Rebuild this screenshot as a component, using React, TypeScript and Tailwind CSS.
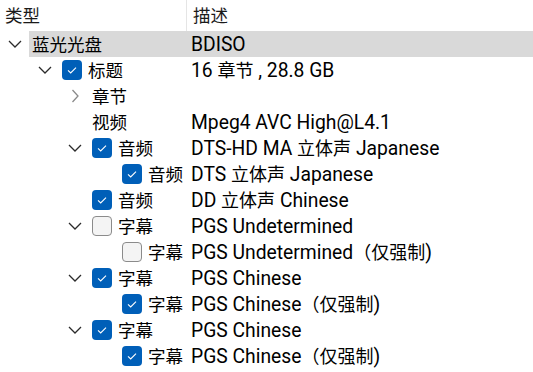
import React from 'react';

type Row = {
  level: number;
  chev?: 'down' | 'right';
  check?: boolean;
  label: string;
  desc: string;
  selected?: boolean;
};

const ROWS: Row[] = [
  { level: 0, chev: 'down', label: '蓝光光盘', desc: 'BDISO', selected: true },
  { level: 1, chev: 'down', check: true, label: '标题', desc: '16 章节 , 28.8 GB' },
  { level: 2, chev: 'right', label: '章节', desc: '' },
  { level: 2, label: '视频', desc: 'Mpeg4 AVC High@L4.1' },
  { level: 2, chev: 'down', check: true, label: '音频', desc: 'DTS-HD MA 立体声 Japanese' },
  { level: 3, check: true, label: '音频', desc: 'DTS 立体声 Japanese' },
  { level: 2, check: true, label: '音频', desc: 'DD 立体声 Chinese' },
  { level: 2, chev: 'down', check: false, label: '字幕', desc: 'PGS Undetermined' },
  { level: 3, check: false, label: '字幕', desc: 'PGS Undetermined（仅强制)' },
  { level: 2, chev: 'down', check: true, label: '字幕', desc: 'PGS Chinese' },
  { level: 3, check: true, label: '字幕', desc: 'PGS Chinese（仅强制)' },
  { level: 2, chev: 'down', check: true, label: '字幕', desc: 'PGS Chinese' },
  { level: 3, check: true, label: '字幕', desc: 'PGS Chinese（仅强制)' },
];

const INDENT = [0, 30, 60, 90];
const CJK = /[\u3000-\u9fff\uff00-\uffef]/;

// latin runs in Roboto a little larger than the CJK runs, like Segoe UI next to YaHei
function Desc({ text }: { text: string }) {
  const parts = text.split(/([\u3000-\u9fff\uff00-\uffef]+)/).filter(Boolean);
  return (
    <span>
      {parts.map((p, i) =>
        CJK.test(p) ? (
          <span key={i} className="text-[18px]" style={{ fontFamily: '"Noto Sans CJK SC", sans-serif' }}>{p}</span>
        ) : (
          <span key={i} className="text-[19.3px]" style={{ fontFamily: 'Roboto, sans-serif' }}>{p}</span>
        )
      )}
    </span>
  );
}

function Chevron({ dir }: { dir: 'down' | 'right' }) {
  if (dir === 'down') {
    return (
      <svg width="14" height="8" viewBox="0 0 14 8" fill="none">
        <path d="M1 1 L7 7 L13 1" stroke="#2b2b2b" strokeWidth="1.3" />
      </svg>
    );
  }
  return (
    <svg width="8" height="14" viewBox="0 0 8 14" fill="none">
      <path d="M1.5 1 L7 7 L1.5 13" stroke="#8a8a8a" strokeWidth="1.3" />
    </svg>
  );
}

function Checkbox({ checked }: { checked: boolean }) {
  if (!checked) {
    return <div className="w-5 h-5 shrink-0 rounded-[4px] border border-[#8b8b8b] bg-[#f4f4f4]" />;
  }
  return (
    <div className="w-5 h-5 shrink-0 rounded-[4px] bg-[#005fb8] flex items-center justify-center">
      <svg width="20" height="20" viewBox="0 0 20 20" fill="none">
        <path d="M6 10.3 L8.7 13 L14 7.6" stroke="#ffffff" strokeWidth="1.1" />
      </svg>
    </div>
  );
}

export default function App() {
  return (
    <div
      className="w-[533px] h-[372px] bg-white overflow-hidden text-[17.5px] text-black"
      style={{ fontFamily: '"Noto Sans", "Noto Sans CJK SC", sans-serif' }}
    >
      <div className="flex h-[31px] items-center">
        <div className="w-[186px] pl-[5px] text-[#1a1a1a]">类型</div>
        <div className="h-full border-l border-[#e5e5e5] pl-[6px] flex items-center text-[#1a1a1a]">描述</div>
      </div>
      {ROWS.map((r, i) => {
        const x = INDENT[r.level];
        return (
          <div key={i} className="flex h-[26px] items-center">
            <div className="w-[191px] shrink-0 h-full flex items-center overflow-hidden whitespace-nowrap">
              <div style={{ width: x }} className="shrink-0" />
              <div className="w-[29px] shrink-0 flex items-center justify-center">
                {r.chev && <Chevron dir={r.chev} />}
              </div>
              <div className={`flex-1 h-full flex items-center pl-[3px] ${r.selected ? 'bg-[#d9d9d9]' : ''}`}>
                {r.check !== undefined && (
                  <div className="mr-[6px] flex items-center">
                    <Checkbox checked={r.check} />
                  </div>
                )}
                <span>{r.label}</span>
              </div>
            </div>
            <div className={`flex-1 h-full flex items-center pt-[2px] whitespace-nowrap ${r.selected ? 'bg-[#d9d9d9]' : ''}`}>
              <Desc text={r.desc} />
            </div>
          </div>
        );
      })}
    </div>
  );
}
